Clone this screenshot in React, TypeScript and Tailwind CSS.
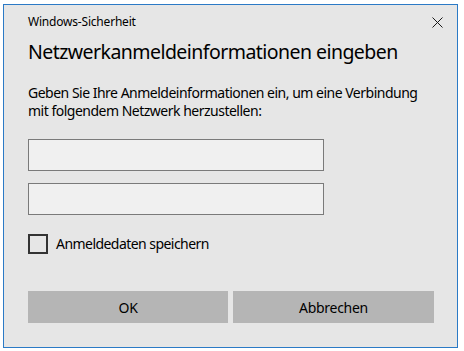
export default function App() {
  return (
    <div className="w-[464px] h-[351px] bg-white pt-[4px] pl-[3px] font-['Noto_Sans',sans-serif] text-black">
      <div className="w-[455px] h-[344px] border border-[#2b7ac6] bg-[#e6e6e6] flex flex-col">
        {/* Titlebar */}
        <div className="flex items-center justify-between pl-[24px] pr-[14px] pt-[6px] h-[28px]">
          <span className="text-[12px] leading-[16px] tracking-[-0.2px]">Windows-Sicherheit</span>
          <svg width="11" height="11" viewBox="0 0 11 11" className="text-[#1a1a1a] mt-[1px]">
            <path d="M0.5 0.5 L10.5 10.5 M10.5 0.5 L0.5 10.5" stroke="currentColor" strokeWidth="1" />
          </svg>
        </div>

        <div className="flex flex-col pl-[24px] pr-[23px]">
          <h1 className="text-[19.5px] leading-[28px] mt-[5px] tracking-[-0.55px] whitespace-nowrap">
            Netzwerkanmeldeinformationen eingeben
          </h1>

          <p className="text-[14px] leading-[18px] mt-[18px] tracking-[-0.5px] whitespace-nowrap">
            Geben Sie Ihre Anmeldeinformationen ein, um eine Verbindung
            <br />
            mit folgendem Netzwerk herzustellen:
          </p>

          <div className="flex flex-col gap-[12px] mt-[19px]">
            <input className="w-[296px] h-[32px] border border-[#7a7a7a] bg-[#f0f0f0] outline-none" />
            <input className="w-[296px] h-[32px] border border-[#7a7a7a] bg-[#f0f0f0] outline-none" />
          </div>

          <label className="flex items-center gap-[8px] mt-[19px]">
            <span className="w-[20px] h-[20px] border-2 border-[#333333]" />
            <span className="text-[14px] leading-[20px] tracking-[-0.55px]">Anmeldedaten speichern</span>
          </label>

          <div className="flex gap-[5px] mt-[37px]">
            <button className="w-[200px] h-[32px] bg-[#b5b5b5] text-[14px] tracking-[-0.3px]">OK</button>
            <button className="w-[201px] h-[32px] bg-[#b5b5b5] text-[14px] tracking-[-0.3px]">Abbrechen</button>
          </div>
        </div>
      </div>
    </div>
  );
}
